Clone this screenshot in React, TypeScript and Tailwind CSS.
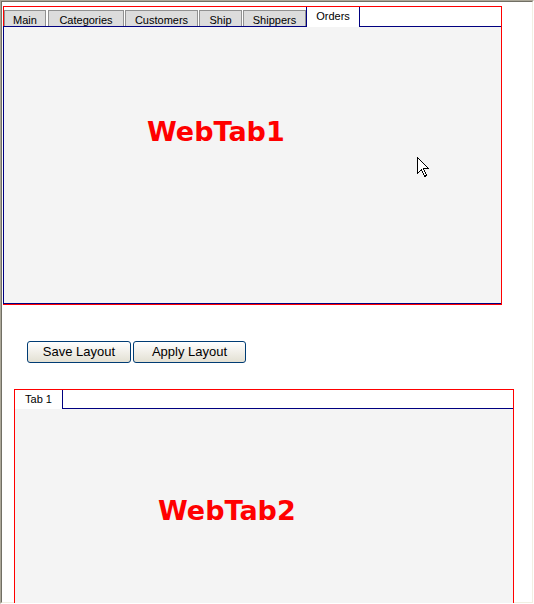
import React from "react";

// tab strip item for the top control
type TabItem = { label: string; width: string; gap: string };

const tabs: TabItem[] = [
  { label: "Main", width: "w-[42px]", gap: "ml-0" },
  { label: "Categories", width: "w-[76px]", gap: "ml-[2px]" },
  { label: "Customers", width: "w-[73px]", gap: "ml-px" },
  { label: "Ship", width: "w-[43px]", gap: "ml-px" },
  { label: "Shippers", width: "w-[63px]", gap: "ml-px" },
];

const uiFont = { fontFamily: '"Liberation Sans", Arial, sans-serif' };
const bigFont = { fontFamily: '"DejaVu Sans", Verdana, sans-serif' };

function Cursor() {
  return (
    <svg width="13" height="21" viewBox="0 0 13 21" className="absolute left-[413px] top-[130px]">
      <path
        d="M0.5 0.5 L0.5 16.5 L4.5 12.5 L7.5 19.5 L9.5 18.5 L6.5 11.5 L11.5 11.5 Z"
        fill="white"
        stroke="black"
        strokeWidth="1"
        shapeRendering="crispEdges"
      />
    </svg>
  );
}

export default function App() {
  return (
    <div className="w-[534px] h-[604px] overflow-hidden bg-white border-t border-l border-[#aca899] border-r-white border-b-white border-r border-b" style={uiFont}>
      <div className="w-full h-full border-t border-l border-[#716f64] border-r border-b border-r-[#f1efe2] border-b-[#f1efe2] bg-white">
        {/* --- WEBTAB 1 --- */}
        <div className="ml-px mt-[4px] w-[499px] h-[299px] border border-[#ff0000] flex flex-col">
          <div className="flex items-end h-[20px] -mb-px relative z-10">
            {tabs.map((t) => (
              <div
                key={t.label}
                className={`${t.width} ${t.gap} mb-px h-[16px] border-t border-x border-[#919191] bg-[#dcdcdc] text-black text-[11px] leading-[12px] pt-[3px] text-center`}
              >
                {t.label}
              </div>
            ))}
            <div className="w-[54px] h-[20px] bg-white border-x border-[#000080] text-black text-[11px] leading-[12px] pt-[3px] text-center">
              Orders
            </div>
          </div>
          <div className="relative -ml-px flex-1 border-t border-l border-b border-[#000080] bg-[#f4f4f4] pl-[143px] pt-[91px]">
            <div className="text-[27px] leading-[27px] font-bold text-[#ff0000]" style={bigFont}>
              WebTab1
            </div>
            <Cursor />
          </div>
        </div>

        {/* --- BUTTONS --- */}
        <div className="flex gap-[2px] ml-[25px] mt-[36px]">
          <button className="w-[104px] h-[22px] rounded-[3px] border border-[#003c74] bg-gradient-to-b from-white to-[#e3e0d3] text-[13px] text-black leading-[20px]">
            Save Layout
          </button>
          <button className="w-[113px] h-[22px] rounded-[3px] border border-[#003c74] bg-gradient-to-b from-white to-[#e3e0d3] text-[13px] text-black leading-[20px]">
            Apply Layout
          </button>
        </div>

        {/* --- WEBTAB 2 --- */}
        <div className="ml-[12px] mt-[26px] w-[500px] h-[260px] border border-[#ff0000] flex flex-col">
          <div className="flex items-end h-[19px] -mb-px relative z-10">
            <div className="w-[48px] h-[19px] bg-white border-r border-[#000080] text-black text-[11px] leading-[12px] pt-[3px] text-center">
              Tab 1
            </div>
          </div>
          <div className="flex-1 border-t border-[#000080] bg-[#f4f4f4] pl-[143px] pt-[88px]">
            <div className="text-[27px] leading-[27px] font-bold text-[#ff0000]" style={bigFont}>
              WebTab2
            </div>
          </div>
        </div>
      </div>
    </div>
  );
}
